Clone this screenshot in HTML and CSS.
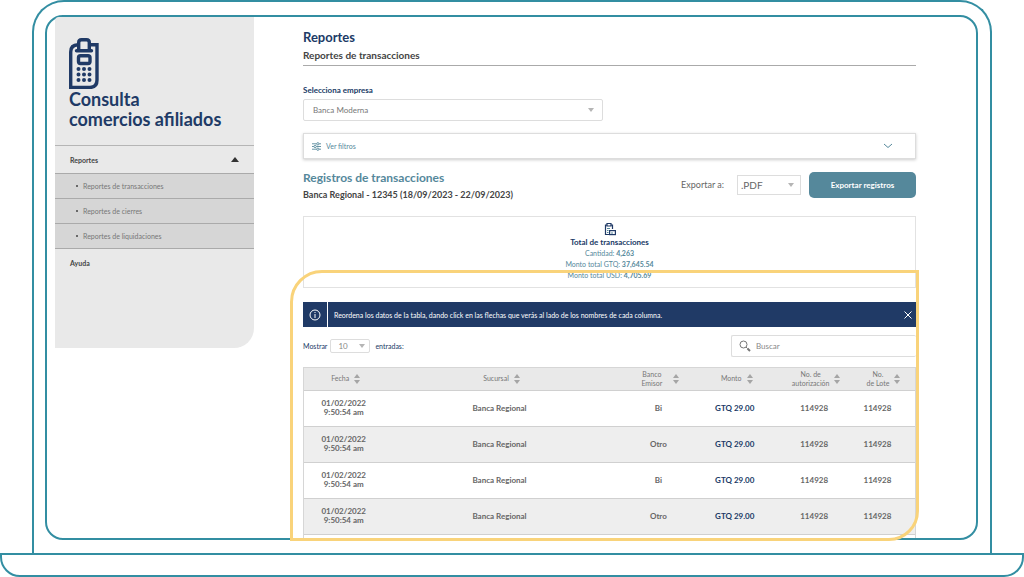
FILE: index.html
```html
<!DOCTYPE html>
<html lang="es">
<head>
    <meta charset="UTF-8">
    <meta name="viewport" content="width=device-width, initial-scale=1.0">
    <title>Consulta comercios afiliados</title>
    <link rel="stylesheet" href="styles.css">
</head>
<body>
    <div class="lid">
        <div class="screen">
            <!-- Sidebar -->
            <aside class="sidebar">
                <div class="brand">
                    <svg class="brand-icon" viewBox="0 0 30 51" aria-hidden="true">
                        <path d="M9 6.800Q1.700 7 1.700 14V49.400H21Q28 49.400 28 42V6.800H22" fill="none" stroke="#203a66" stroke-width="3.400"/>
                        <path d="M9.700 12V4.500Q9.700 1.700 12.500 1.700H17.500Q20.300 1.700 20.300 4.500V12" fill="none" stroke="#203a66" stroke-width="3.400"/>
                        <path d="M7.500 12.800H22.500" stroke="#203a66" stroke-width="3.400" stroke-linecap="round"/>
                        <rect x="9.500" y="17.700" width="11.500" height="7.800" rx="2" fill="none" stroke="#203a66" stroke-width="3.400"/>
                        <path d="M9.500 31H21M9.500 36.500H21M9.500 42H21" stroke="#203a66" stroke-width="4" stroke-linecap="round" stroke-dasharray="0 5.500"/>
                    </svg>
                    <h1>Consulta<br>comercios afiliados</h1>
                </div>
                <nav>
                    <button class="menu-toggle" type="button">Reportes <span class="arrow-up"></span></button>
                    <ul class="submenu">
                        <li><a href="#transacciones">Reportes de transacciones</a></li>
                        <li><a href="#cierres">Reportes de cierres</a></li>
                        <li><a href="#liquidaciones">Reportes de liquidaciones</a></li>
                    </ul>
                    <a class="menu-link" href="#ayuda">Ayuda</a>
                </nav>
            </aside>

            <main class="content">
                <header class="page-header">
                    <h2>Reportes</h2>
                    <p>Reportes de transacciones</p>
                </header>

                <label class="field-label" for="empresa">Selecciona empresa</label>
                <div class="select select-company">
                    <select id="empresa"><option>Banca Moderna</option></select>
                </div>

                <button class="filters" type="button">
                    <svg class="filters-icon" viewBox="0 0 10 10" aria-hidden="true">
                        <path d="M0 2H5M8 2H10M0 5H2M5 5H10M0 8H5M8 8H10"/>
                        <circle cx="6.500" cy="2" r="1.300"/><circle cx="3.500" cy="5" r="1.300"/><circle cx="6.500" cy="8" r="1.300"/>
                    </svg>
                    Ver filtros
                    <svg class="chevron" viewBox="0 0 10 6" aria-hidden="true"><path d="M1 1L5 4.500L9 1"/></svg>
                </button>

                <div class="records-header">
                    <div class="records-title">
                        <h3>Registros de transacciones</h3>
                        <p>Banca Regional - 12345 (18/09/2023 - 22/09/2023)</p>
                    </div>
                    <div class="export">
                        <label for="formato">Exportar a:</label>
                        <div class="select select-format">
                            <select id="formato"><option>.PDF</option></select>
                        </div>
                        <button class="export-button" type="button">Exportar registros</button>
                    </div>
                </div>

                <section class="summary">
                    <svg class="summary-icon" viewBox="0 0 12 14" aria-hidden="true">
                        <path d="M5 12.500H1.500V3H3M7 3H8.500V7M3 3V1.500H7V4H3Z" fill="none" stroke="#203a66" stroke-width="1.200"/>
                        <path d="M3 6.500H6M3 8.500H4.500M3 10.500H4.500" stroke="#55889b"/>
                        <rect x="5.600" y="8.600" width="5.800" height="4" fill="#fff" stroke="#203a66" stroke-width="1.200"/>
                        <path d="M7 11H9" stroke="#55889b"/>
                    </svg>
                    <h4>Total de transacciones</h4>
                    <p>Cantidad: <b>4,263</b></p>
                    <p>Monto total GTQ: <b>37,645.54</b></p>
                    <p>Monto total USD: <b>4,705.69</b></p>
                </section>

                <div class="notice">
                    <span class="notice-icon">
                        <svg viewBox="0 0 12 12" aria-hidden="true"><circle cx="6" cy="6" r="5"/><path d="M6 5V9M6 3V4"/></svg>
                    </span>
                    <p>Reordena los datos de la tabla, dando click en las flechas que verás al lado de los nombres de cada columna.</p>
                    <button class="notice-close" type="button" aria-label="Cerrar">
                        <svg viewBox="0 0 8 8" aria-hidden="true"><path d="M0.500 0.500L7.500 7.500M7.500 0.500L0.500 7.500"/></svg>
                    </button>
                </div>

                <div class="table-tools">
                    <label for="entradas">Mostrar</label>
                    <div class="select select-count">
                        <select id="entradas"><option>10</option></select>
                    </div>
                    <span>entradas:</span>
                    <div class="search">
                        <svg viewBox="0 0 12 12" aria-hidden="true"><circle cx="4.500" cy="4.500" r="3.500"/><path d="M7 7L8.500 8.500"/><path class="handle" d="M8.500 8.500L11 11"/></svg>
                        <input type="search" placeholder="Buscar" aria-label="Buscar">
                    </div>
                </div>

                <div class="records-wrap">
                    <table class="records">
                        <colgroup>
                            <col class="col-date"><col class="col-branch"><col class="col-bank">
                            <col class="col-amount"><col class="col-auth"><col class="col-batch">
                        </colgroup>
                        <thead>
                            <tr>
                                <th><button type="button">Fecha <span class="sort"></span></button></th>
                                <th><button type="button">Sucursal <span class="sort"></span></button></th>
                                <th><button type="button"><span>Banco<br>Emisor</span> <span class="sort sort-far"></span></button></th>
                                <th><button type="button">Monto <span class="sort"></span></button></th>
                                <th><button type="button"><span>No. de<br>autorización</span> <span class="sort"></span></button></th>
                                <th><button type="button"><span>No.<br>de Lote</span> <span class="sort"></span></button></th>
                            </tr>
                        </thead>
                        <tbody>
                            <tr>
                                <td>01/02/2022<br>9:50:54 am</td>
                                <td>Banca Regional</td>
                                <td>Bi</td>
                                <td class="amount">GTQ 29.00</td>
                                <td>114928</td>
                                <td>114928</td>
                            </tr>
                            <tr>
                                <td>01/02/2022<br>9:50:54 am</td>
                                <td>Banca Regional</td>
                                <td>Otro</td>
                                <td class="amount">GTQ 29.00</td>
                                <td>114928</td>
                                <td>114928</td>
                            </tr>
                            <tr>
                                <td>01/02/2022<br>9:50:54 am</td>
                                <td>Banca Regional</td>
                                <td>Bi</td>
                                <td class="amount">GTQ 29.00</td>
                                <td>114928</td>
                                <td>114928</td>
                            </tr>
                            <tr>
                                <td>01/02/2022<br>9:50:54 am</td>
                                <td>Banca Regional</td>
                                <td>Otro</td>
                                <td class="amount">GTQ 29.00</td>
                                <td>114928</td>
                                <td>114928</td>
                            </tr>
                        </tbody>
                    </table>
                </div>

                <div class="highlight"></div>
            </main>
        </div>
    </div>
    <div class="base"></div>
</body>
</html>
```
FILE: styles.css
```css
* {
    box-sizing: border-box;
}

body {
    margin: 0;
    min-height: 100vh;
    display: flex;
    flex-direction: column;
    background: #fff;
    color: #666;
    font-family: Lato, sans-serif;
    font-size: 8px;
    line-height: 10px;
}

h1, h2, h3, h4, p, ul {
    margin: 0;
    padding: 0;
}

button, select, input {
    margin: 0;
    padding: 0;
    border: 0;
    background: none;
    color: inherit;
    font: inherit;
}

button {
    cursor: pointer;
}

a {
    color: inherit;
    text-decoration: none;
}

svg {
    display: block;
    flex: none;
}

/* Laptop frame */
.lid {
    flex: 1;
    display: flex;
    margin: 0 32px;
    padding: 13px 12px 13px 11px;
    border: 2px solid #338ea2;
    border-bottom: 0;
    border-radius: 32px 32px 0 0;
}

.screen {
    flex: 1;
    display: flex;
    align-items: flex-start;
    padding: 0 60px 0 8px;
    border: 2px solid #338ea2;
    border-radius: 18px;
}

.base {
    height: 24px;
    border: 2px solid #338ea2;
    border-radius: 0 0 20px 20px;
}

/* Sidebar */
.sidebar {
    flex: none;
    width: 199px;
    min-height: 331px;
    background: #e9e9e9;
    border-radius: 4px 0 20px 0;
    color: #444;
}

.brand {
    padding: 21px 14px 16px;
}

.brand-icon {
    width: 30px;
    height: 51px;
}

.brand h1 {
    color: #203a66;
    font-size: 18px;
    line-height: 20px;
}

.menu-toggle, .menu-link {
    display: flex;
    align-items: center;
    justify-content: space-between;
    width: 100%;
    height: 28px;
    padding: 0 15px;
    font-size: 7px;
    font-weight: bold;
}

.menu-toggle {
    border-top: 1px solid #b5b5b5;
}

.arrow-up {
    border: 4px solid transparent;
    border-top: 0;
    border-bottom: 5px solid #333;
}

.submenu {
    list-style: none;
    background: #d6d6d6;
    border-bottom: 1px solid #aaa;
}

.submenu a {
    display: flex;
    align-items: center;
    height: 25px;
    padding-left: 21px;
    border-top: 1px solid #aaa;
    color: #777;
    font-size: 7px;
}

.submenu a::before {
    content: "";
    width: 2px;
    height: 2px;
    margin-right: 5px;
    border-radius: 1px;
    background: #444;
}

/* Content */
.content {
    position: relative;
    flex: 1;
    min-width: 0;
    margin-left: 49px;
}

.page-header {
    padding: 12px 0 3px;
    border-bottom: 1px solid #aaa;
    margin-bottom: 19px;
}

.page-header h2 {
    color: #203a66;
    font-size: 13px;
    line-height: 16px;
}

.page-header p {
    margin-top: 3px;
    color: #444;
    font-size: 10px;
    font-weight: bold;
    line-height: 14px;
}

.field-label {
    display: block;
    margin-bottom: 4px;
    color: #203a66;
    font-weight: bold;
}

.select {
    position: relative;
    border: 1px solid #ddd;
}

.select select {
    display: block;
    appearance: none;
    width: 100%;
    height: 100%;
}

.select::after {
    content: "";
    position: absolute;
    top: 50%;
    right: 8px;
    margin-top: -2px;
    border: 3px solid transparent;
    border-top: 4px solid #b5b5b5;
    border-bottom: 0;
    pointer-events: none;
}

.select-company {
    width: 49%;
    height: 22px;
    border-radius: 2px;
}

.select-company select {
    padding-left: 9px;
    color: #777;
}

.filters {
    display: flex;
    align-items: center;
    gap: 5px;
    width: 100%;
    height: 26px;
    margin: 12px 0 10px;
    padding: 0 22px 0 8px;
    border: 1px solid #ddd;
    box-shadow: 0 1px 3px #ccc;
    color: #55889b;
    font-size: 7px;
}

.filters-icon {
    width: 9px;
    height: 9px;
}

.filters-icon, .chevron {
    fill: none;
    stroke: #55889b;
    stroke-width: 1;
}

.chevron {
    width: 10px;
    height: 6px;
    margin-left: auto;
}

.records-header {
    display: flex;
    justify-content: space-between;
    margin-bottom: 15px;
}

.records-title h3 {
    color: #55889b;
    font-size: 12px;
    line-height: 18px;
}

.records-title p {
    margin-top: 2px;
    color: #444;
    font-size: 9px;
    font-weight: bold;
    line-height: 12px;
}

.export {
    display: flex;
    align-items: center;
    height: 26px;
    margin-top: 3px;
    font-size: 9px;
}

.select-format {
    width: 64px;
    height: 20px;
    margin: 0 8px 0 13px;
    font-size: 10px;
}

.select-format::after {
    right: 6px;
}

.select-format select {
    padding-left: 3px;
}

.export-button {
    width: 107px;
    height: 26px;
    border-radius: 5px;
    background: #55889b;
    color: #fff;
    font-size: 8px;
    font-weight: bold;
}

.summary {
    display: flex;
    flex-direction: column;
    align-items: center;
    height: 72px;
    padding-top: 5px;
    border: 1px solid #e2e2e2;
    color: #55889b;
    font-size: 7px;
    line-height: 11px;
}

.summary-icon {
    width: 12px;
    height: 14px;
}

.summary h4 {
    color: #203a66;
    font-size: 8px;
    line-height: 12px;
}

.notice {
    display: flex;
    align-items: center;
    height: 25px;
    margin: 14px 0 8px;
    background: #203a66;
    color: #fff;
    font-size: 7px;
}

.notice-icon {
    display: grid;
    place-items: center;
    width: 25px;
    height: 100%;
    margin-right: 6px;
    border-right: 1px solid #fff;
}

.notice svg {
    width: 12px;
    height: 12px;
    fill: none;
    stroke: #fff;
}

.notice-close {
    margin-left: auto;
    padding: 4px;
}

.notice .notice-close svg {
    width: 8px;
    height: 8px;
}

.table-tools {
    display: flex;
    align-items: center;
    gap: 3px;
    margin-bottom: 10px;
    color: #203a66;
    font-size: 7px;
}

.select-count {
    width: 40px;
    height: 14px;
    margin-right: 2px;
    border-radius: 2px;
    color: #888;
    font-size: 8px;
}

.select-count::after {
    right: 4px;
}

.select-count select {
    padding-left: 7px;
}

.search {
    display: flex;
    align-items: center;
    gap: 5px;
    width: 185px;
    height: 22px;
    margin-left: auto;
    padding-left: 7px;
    border: 1px solid #ddd;
    border-right: 0;
    border-radius: 2px;
    font-size: 8px;
}

.search svg {
    width: 12px;
    height: 12px;
    fill: none;
    stroke: #777;
}

.search .handle {
    stroke-width: 2;
}

.search input {
    flex: 1;
    min-width: 0;
}

.search input::placeholder {
    color: #888;
}

/* Records table */
.records-wrap {
    padding-bottom: 3px;
    border: 1px solid #d6d6d6;
    border-bottom: 0;
}

.records {
    width: 100%;
    table-layout: fixed;
    border-collapse: collapse;
    text-align: center;
}

.col-date { width: 13%; }
.col-branch { width: 38%; }
.col-bank { width: 14%; }
.col-amount { width: 11%; }
.col-auth { width: 15%; }
.col-batch { width: 9%; }

.records th {
    height: 22px;
    padding: 0 0 0 4px;
    background: #e9e9e9;
    color: #777;
    font-size: 7px;
    font-weight: normal;
    line-height: 9px;
}

.records th:last-child {
    padding: 0 8px 0 0;
}

.records th button {
    display: inline-flex;
    align-items: center;
    gap: 5px;
    vertical-align: middle;
}

.sort {
    display: grid;
    gap: 2px;
}

.sort-far {
    margin-left: 6px;
}

.sort::before, .sort::after {
    content: "";
    border: 3px solid transparent;
}

.sort::before {
    border-top: 0;
    border-bottom: 4px solid #a5a5a5;
}

.sort::after {
    border-bottom: 0;
    border-top: 4px solid #a5a5a5;
}

.records td {
    height: 36px;
    padding: 0;
    border-top: 1px solid #d0d0d0;
    border-bottom: 1px solid #d0d0d0;
    font-weight: bold;
    line-height: 9px;
}

.records td:last-child {
    padding-right: 20px;
}

.records tbody tr:nth-child(even) {
    background: #eee;
}

.records .amount {
    color: #203a66;
}

/* Frame around the table area */
.highlight {
    position: absolute;
    top: 253px;
    right: -3px;
    bottom: -3px;
    left: -13px;
    border: 3px solid #f9d37a;
    border-radius: 32px 0 30px 0;
    pointer-events: none;
}
```
